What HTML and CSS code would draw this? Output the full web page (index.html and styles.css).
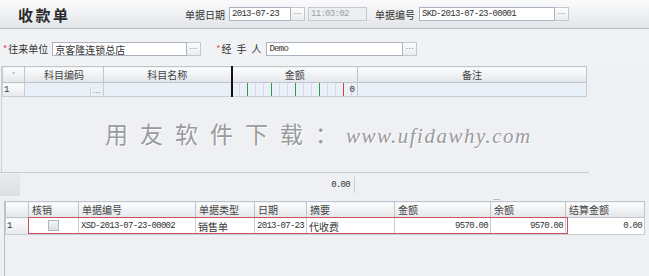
FILE: index.html
```html
<!DOCTYPE html>
<html lang="zh-CN">
<head>
  <meta charset="UTF-8">
  <meta name="viewport" content="width=device-width, initial-scale=1.0">
  <link rel="stylesheet" href="styles.css">
</head>
<body>

  <div class="topbar">
    <div class="title">收款单</div>
    <span class="label lbl-date">单据日期</span>
    <span class="input num w-date">2013-07-23</span>
    <span class="btn">...</span>
    <span class="input input-off num w-time">11:03:02</span>
    <span class="label lbl-no">单据编号</span>
    <span class="input num w-no">SKD-2013-07-23-00001</span>
    <span class="btn">...</span>
  </div>

  <div class="headrow">
    <span class="req">*</span>
    <span class="label">往来单位</span>
    <span class="input w-cust">京客隆连锁总店</span>
    <span class="btn">...</span>
    <span class="req req-2">*</span>
    <span class="label spaced">经手人</span>
    <span class="input num w-man">Demo</span>
    <span class="btn">...</span>
  </div>

  <div class="upper">
    <table class="grid grid-top">
      <colgroup>
        <col style="width:22px">
        <col style="width:79px">
        <col style="width:128px">
        <col style="width:126px">
        <col style="width:229px">
      </colgroup>
      <thead>
        <tr>
          <th class="star">*</th>
          <th>科目编码</th>
          <th>科目名称</th>
          <th class="money">金额</th>
          <th>备注</th>
        </tr>
      </thead>
      <tbody>
        <tr>
          <td class="rownum">1</td>
          <td class="code"><span class="cell-btn">...</span></td>
          <td></td>
          <td class="money ticks">0</td>
          <td></td>
        </tr>
      </tbody>
    </table>
    <div class="watermark">用友软件下载：<span class="url">www.ufidawhy.com</span></div>
  </div>

  <div class="sumrow">
    <span class="sum-corner"></span>
    <span class="sum-val num">0.00</span>
  </div>

  <div class="splitter">.....</div>

  <div class="lower">
    <table class="grid grid-bottom">
      <colgroup>
        <col style="width:23px">
        <col style="width:50px">
        <col style="width:117px">
        <col style="width:59px">
        <col style="width:52px">
        <col style="width:88px">
        <col style="width:96px">
        <col style="width:75px">
        <col style="width:79px">
      </colgroup>
      <thead>
        <tr>
          <th></th>
          <th>核销</th>
          <th>单据编号</th>
          <th>单据类型</th>
          <th>日期</th>
          <th>摘要</th>
          <th>金额</th>
          <th>余额</th>
          <th>结算金额</th>
        </tr>
      </thead>
      <tbody>
        <tr>
          <td class="rownum">1</td>
          <td class="center"><span class="check"></span></td>
          <td class="num">XSD-2013-07-23-00002</td>
          <td>销售单</td>
          <td class="num">2013-07-23</td>
          <td>代收费</td>
          <td class="num right">9570.00</td>
          <td class="num right">9570.00</td>
          <td class="num right">0.00</td>
        </tr>
      </tbody>
    </table>
    <div class="selection"></div>
  </div>

</body>
</html>
```

FILE: styles.css
```css
body {
  margin: 0;
  width: 649px;
  height: 276px;
  overflow: hidden;
  background-color: #eef0f3;
  font-family: "Noto Sans CJK SC", "Liberation Sans", sans-serif;
  font-size: 10px;
  color: #333;
}

.num {
  font-family: "Liberation Mono", "Noto Sans CJK SC", monospace;
  font-size: 9px;
  letter-spacing: -0.7px;
}

/* top bar */
.topbar {
  display: flex;
  align-items: center;
  height: 28px;
  border-bottom: 1px solid #b7bec7;
  background: linear-gradient(#fbfbfc, #e2e5e9);
}

.title {
  width: 185px;
  padding-left: 18px;
  box-sizing: border-box;
  font-size: 15px;
  font-weight: bold;
  letter-spacing: 2.5px;
  color: #2b2b2b;
}

.label {
  margin-right: 4px;
  white-space: nowrap;
}

.input {
  display: inline-block;
  height: 14px;
  line-height: 13px;
  padding-left: 2px;
  box-sizing: border-box;
  border: 1px solid #aab3be;
  background-color: #fff;
  white-space: nowrap;
  overflow: hidden;
}

.input-off {
  background-color: #edeef0;
  color: #9aa0a8;
  border-color: #c5cad0;
  margin-left: 3px;
}

.btn {
  display: inline-block;
  width: 14px;
  height: 14px;
  line-height: 9px;
  box-sizing: border-box;
  border: 1px solid #c3c8cf;
  border-left: none;
  background: linear-gradient(#fdfdfd, #e9ecef);
  text-align: center;
  font-family: "DejaVu Sans", sans-serif;
  font-size: 7px;
  letter-spacing: 0.5px;
  color: #555;
}

.w-date { width: 62px; }
.w-time { width: 59px; }
.w-no { width: 136px; }
.w-cust { width: 135px; }
.w-man { width: 137px; }

.lbl-no { margin-left: 8px; }

/* head row */
.headrow {
  display: flex;
  align-items: center;
  height: 37px;
  padding-left: 3px;
  padding-top: 2px;
  box-sizing: border-box;
  background-color: #f1f2f4;
}

.req {
  color: #e2475a;
  font-size: 9px;
  margin-right: 1px;
}

.req-2 {
  margin-left: 15px;
}

.spaced {
  letter-spacing: 5px;
  margin-right: 0;
}

/* grids */
.grid {
  border-collapse: collapse;
  table-layout: fixed;
}

.grid th {
  height: 15px;
  padding: 0;
  border: 1px solid #bfc5cd;
  background: linear-gradient(#fdfdfd, #e3e6ea);
  font-weight: normal;
  color: #444;
}

.grid td {
  height: 13px;
  padding: 0 2px;
  border: 1px solid #c7cdd4;
  white-space: nowrap;
  overflow: hidden;
}

.upper {
  height: 106px;
  border-left: 1px solid #ccd1d8;
  margin-left: 1px;
}

.grid-top {
  width: 584px;
}

.grid-top th {
  text-align: center;
}

.grid-top tbody td {
  background-color: #eaf0f7;
}

.grid-top .star {
  color: #aaa;
  font-size: 8px;
}

.grid-top .money {
  border-left: 2px solid #111;
}

.grid-top td.rownum,
.grid-bottom td.rownum {
  background: linear-gradient(#fdfdfd, #e6e9ed);
  font-family: "Liberation Mono", monospace;
  font-size: 9px;
  padding-left: 1px;
}

.grid-top td.code {
  text-align: right;
  padding: 0;
  line-height: 9px;
}

.cell-btn {
  display: inline-block;
  width: 12px;
  border-left: 1px solid #d3d7dc;
  text-align: center;
  font-family: "DejaVu Sans", sans-serif;
  font-size: 7px;
  letter-spacing: 0.5px;
  color: #555;
}

.ticks {
  text-align: right;
  font-family: "Liberation Mono", monospace;
  font-size: 9px;
  padding: 0 1px 0 0;
  background-image:
    linear-gradient(to right, transparent 110px, #e23a3a 110px, #e23a3a 111px, transparent 111px),
    repeating-linear-gradient(to right, transparent 0, transparent 14px, #2f9a3f 14px, #2f9a3f 15px, transparent 15px, transparent 24px),
    repeating-linear-gradient(to right, transparent 0, transparent 6px, #d6dae0 6px, #d6dae0 7px, transparent 7px, transparent 8px);
  background-size: 100% 100%, 110px 100%, 124px 100%;
  background-repeat: no-repeat;
}

.watermark {
  margin-top: 19px;
  padding-left: 103px;
  font-family: "Liberation Serif", serif;
  font-size: 23px;
  letter-spacing: 12px;
  color: #9a9b9e;
  text-shadow: 1px 1px 0 #fff;
  white-space: nowrap;
}

.watermark .url {
  font-style: italic;
  font-size: 21px;
  letter-spacing: 1.5px;
  margin-left: -4px;
}

/* totals row */
.sumrow {
  display: flex;
  align-items: center;
  height: 24px;
  width: 589px;
  border-top: 1px solid #c3cad3;
}

.sum-corner {
  width: 20px;
  height: 22px;
  background: linear-gradient(#e8ebee, #dcdfe3);
}

.sum-val {
  width: 330px;
  text-align: right;
  padding-right: 4px;
  border-right: 1px solid #c7ccd3;
  height: 16px;
  line-height: 16px;
}

.splitter {
  height: 4px;
  line-height: 0;
  padding-left: 493px;
  font-size: 8px;
  color: #9aa0a8;
  letter-spacing: -1px;
}

/* lower grid */
.lower {
  position: relative;
  margin-left: 4px;
  height: 75px;
  border-left: 1px solid #b9c0c8;
}

.grid-bottom {
  width: 639px;
}

.grid-bottom th {
  text-align: left;
  padding-left: 3px;
}

.grid-bottom td {
  height: 14px;
  background-color: #fff;
  font-size: 10px;
}

.grid-bottom td.num {
  font-size: 9px;
}

.center {
  text-align: center;
}

.right {
  text-align: right;
}

.check {
  display: inline-block;
  width: 9px;
  height: 9px;
  margin-top: 2px;
  border: 1px solid #aeb5be;
  background: linear-gradient(#f2f3f5, #dcdfe3);
}

.selection {
  position: absolute;
  left: 23px;
  top: 16px;
  width: 538px;
  height: 15px;
  border: 1px solid #d0505e;
  pointer-events: none;
}
```
